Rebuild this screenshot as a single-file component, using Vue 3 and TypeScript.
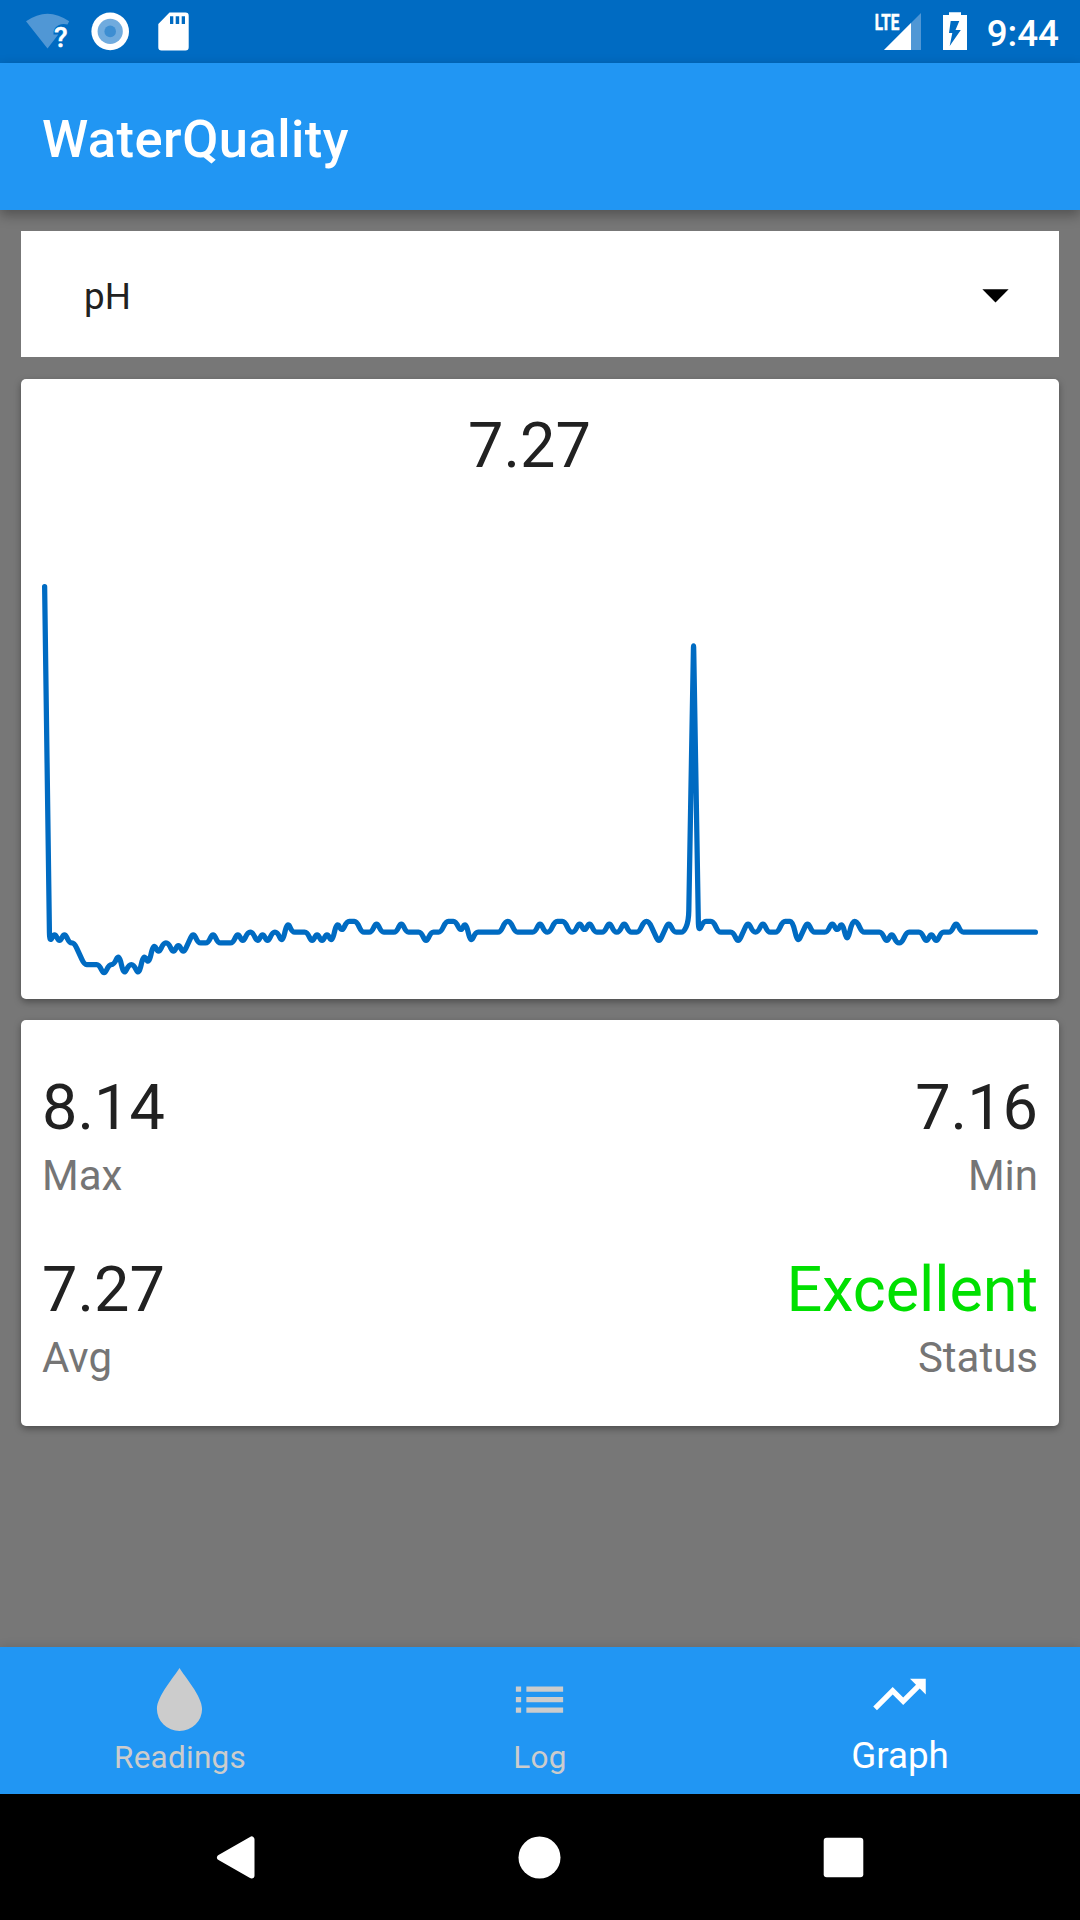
<script setup lang="ts">
interface Stat {
  value: string
  label: string
  good?: boolean
}

interface Point {
  x: number
  y: number
}

const statRows: Stat[][] = [
  [
    { value: '8.14', label: 'Max' },
    { value: '7.16', label: 'Min' },
  ],
  [
    { value: '7.27', label: 'Avg' },
    { value: 'Excellent', label: 'Status', good: true },
  ],
]

// Sensor steps above or below the baseline, as [step, repeat count].
const runs: [number, number][] = [
  [32, 1], [-1, 1], [0, 1], [-1, 1], [0, 1], [-1, 2], [-2, 1], [-3, 4], [-4, 1], [-3, 2],
  [-2, 1], [-4, 1], [-3, 2], [-4, 1], [-2, 1], [-3, 1], [-1, 1], [-2, 1], [-1, 2], [-2, 1],
  [-1, 1], [-2, 1], [-1, 1], [0, 1], [-1, 3], [0, 1], [-1, 4], [0, 1], [-1, 1], [0, 2],
  [-1, 1], [0, 1], [-1, 1], [0, 2], [-1, 1], [1, 1], [0, 4], [-1, 1], [0, 1], [-1, 1],
  [0, 1], [-1, 1], [1, 1], [0, 1], [1, 3], [0, 3], [1, 1], [0, 4], [1, 1], [0, 4],
  [-1, 1], [0, 3], [1, 3], [0, 1], [1, 1], [-1, 1], [0, 6], [1, 2], [0, 5], [1, 1],
  [0, 2], [1, 3], [0, 2], [1, 1], [0, 1], [1, 1], [0, 3], [1, 1], [0, 2], [1, 1],
  [0, 3], [1, 2], [0, 1], [-1, 1], [0, 1], [1, 1], [0, 3], [1, 1], [27, 1], [0, 1], [1, 3],
  [0, 4], [-1, 1], [0, 1], [1, 1], [0, 2], [1, 1], [0, 3], [1, 3], [-1, 1], [0, 1],
  [1, 1], [0, 4], [1, 1], [0, 1], [1, 1], [-1, 1], [1, 2], [0, 5], [-1, 1], [0, 1],
  [-1, 2], [0, 4], [-1, 1], [0, 1], [-1, 1], [0, 3], [1, 1], [0, 16],
]

const CHART_W = 996
const CHART_H = 394
const INSET = 2.625
const CORNER = 10.5

function sparkline(): string {
  const levels = runs.flatMap(([step, count]) => Array<number>(count).fill(step))
  const top = Math.max(...levels)
  const bottom = Math.min(...levels)
  const dx = (CHART_W - 2 * INSET) / (levels.length - 1)
  const dy = (CHART_H - 2 * INSET) / (top - bottom)
  const pts: Point[] = levels.map((v, i) => ({ x: INSET + i * dx, y: INSET + (top - v) * dy }))

  // Each corner is rounded by at most CORNER, or half of the shorter segment.
  const towards = (a: Point, b: Point): Point => {
    const d = Math.hypot(b.x - a.x, b.y - a.y)
    const k = d <= CORNER * 2 ? 0.5 : CORNER / d
    return { x: a.x + (b.x - a.x) * k, y: a.y + (b.y - a.y) * k }
  }
  const f = (p: Point) => `${p.x.toFixed(2)} ${p.y.toFixed(2)}`
  let d = `M${f(pts[0])}`
  for (let i = 1; i < pts.length - 1; i++) {
    d += `L${f(towards(pts[i], pts[i - 1]))}Q${f(pts[i])} ${f(towards(pts[i], pts[i + 1]))}`
  }
  return d + `L${f(pts[pts.length - 1])}`
}

const chartPath = sparkline()

const tabs = [
  { label: 'Readings', active: false, icon: 'M12 0C10 3.4 3.4 10.700 3.4 15.600a8.600 8.400 0 0 0 17.200 0C20.600 10.700 14 3.400 12 0z' },
  { label: 'Log', active: false, icon: 'M3 13h2v-2H3v2zm0 4h2v-2H3v2zm0-8h2V7H3v2zm4 4h14v-2H7v2zm0 4h14v-2H7v2zM7 7v2h14V7H7z' },
  { label: 'Graph', active: true, icon: 'M16 6l2.290 2.290-4.880 4.880-4-4L2 16.590 3.410 18l6-6 4 4 6.300-6.290L22 12V6z' },
]
</script>

<template>
  <div class="screen">
    <header class="status">
      <div class="status-left">
        <svg width="44" height="63" viewBox="26 0 44 63">
          <path d="M26 21.300Q47.500 6 69.200 21.300L67.500 24.500Q60 22.500 55 28Q53 31 53.500 34.500H58.300L47.500 48.500z" fill="#5097d5" />
          <text x="54" y="47" class="query">?</text>
        </svg>
        <svg width="38" height="63" viewBox="0 0 38 63">
          <circle cx="19.200" cy="31.400" r="18.800" fill="#fff" />
          <circle cx="19.200" cy="31.400" r="12.600" fill="#70abde" />
          <circle cx="19.200" cy="31.400" r="5.800" fill="#3d8ed2" />
        </svg>
        <svg width="32" height="63" viewBox="158 0 32 63">
          <path fill="#fff" fill-rule="evenodd" d="M169.500 12.500H185.500a3.200 3.200 0 0 1 3.200 3.200V47.300a3.200 3.200 0 0 1-3.200 3.200H161.500a3.200 3.200 0 0 1-3.200-3.200V24zM170 16.300v7.700h3.300v-7.700zM175.700 16.300v7.700h3.500v-7.700zM181.700 16.300v7.700h3.300v-7.700z" />
        </svg>
      </div>
      <div class="status-right">
        <svg width="47" height="63" viewBox="874 0 47 63">
          <path d="M921 13V50H884z" fill="#5097d5" />
          <path d="M911 23V50H884z" fill="#fff" />
          <text x="874.800" y="29.700" textLength="24.500" lengthAdjust="spacingAndGlyphs" class="lte">LTE</text>
        </svg>
        <svg width="24" height="63" viewBox="943 0 24 63">
          <path fill="#fff" fill-rule="evenodd" d="M949 12.300H961V15H967V50H943V15H949zM950.700 21H959.300L955.500 30H960.800L949.700 46L952.300 33H949z" />
        </svg>
        <span class="clock">9:44</span>
      </div>
    </header>

    <div class="toolbar">
      <h1>WaterQuality</h1>
    </div>

    <main>
      <div class="spinner">
        <span>pH</span>
        <svg width="63" height="63" viewBox="0 0 24 24"><path d="M7 10l5 5 5-5z" /></svg>
      </div>

      <section class="card chart-card">
        <div class="reading">7.27</div>
        <svg class="chart" width="996" height="394" viewBox="0 0 996 394">
          <path :d="chartPath" fill="none" stroke="#006bc2" stroke-width="5.250" stroke-linecap="round" />
        </svg>
      </section>

      <section class="card stats">
        <div v-for="(row, i) in statRows" :key="i" class="stat-row">
          <div v-for="s in row" :key="s.label" class="stat">
            <div class="value" :class="{ good: s.good }">{{ s.value }}</div>
            <div class="label">{{ s.label }}</div>
          </div>
        </div>
      </section>
    </main>

    <nav class="tabs">
      <div v-for="t in tabs" :key="t.label" class="tab" :class="{ active: t.active }">
        <svg width="63" height="63" viewBox="0 0 24 24"><path :d="t.icon" fill="currentColor" /></svg>
        <span>{{ t.label }}</span>
      </div>
    </nav>

    <footer class="sysnav">
      <svg width="63" height="63" viewBox="0 0 63 63">
        <path d="M16 31.500L47.500 13.500V49.500z" fill="#fff" stroke="#fff" stroke-width="6" stroke-linejoin="round" />
      </svg>
      <svg width="63" height="63" viewBox="0 0 63 63"><circle cx="31.500" cy="31.500" r="21" fill="#fff" /></svg>
      <svg width="63" height="63" viewBox="0 0 63 63"><rect x="11.700" y="11.700" width="39.600" height="39.600" rx="3" fill="#fff" /></svg>
    </footer>
  </div>
</template>

<style>
body {
  margin: 0;
}
</style>

<style scoped>
.screen {
  width: 1080px;
  height: 1920px;
  display: flex;
  flex-direction: column;
  overflow: hidden;
  background: #777;
  font-family: Roboto, sans-serif;
  color: #212121;
}

svg {
  display: block;
  flex: none;
}

.status {
  height: 63px;
  flex: none;
  display: flex;
  justify-content: space-between;
  background: #006bc2;
  color: #fff;
}

.status-left,
.status-right {
  display: flex;
}

.status-left {
  padding-left: 26px;
  gap: 21px;
}

.status-left svg:last-child {
  margin-left: 8px;
}

.status-right {
  gap: 22px;
  padding-right: 21px;
}

.query {
  font: 500 28px Roboto, sans-serif;
  fill: #fff;
  stroke: #fff;
  stroke-width: 0.4px;
}

.lte {
  font: 700 22px Roboto, sans-serif;
  fill: #fff;
  stroke: #fff;
  stroke-width: 0.6px;
}

.clock {
  font-size: 36.75px;
  font-weight: 500;
  line-height: 67px;
  margin-left: -2px;
}

.toolbar {
  height: 147px;
  flex: none;
  box-sizing: border-box;
  padding: 5px 42px 0;
  display: flex;
  align-items: center;
  background: #2196f3;
  box-shadow: 0 5px 12px rgba(0, 0, 0, 0.32);
}

.toolbar h1 {
  margin: 0;
  font-size: 52.5px;
  font-weight: 500;
  line-height: 62px;
  letter-spacing: 0.46px;
  color: #fff;
}

main {
  flex: 1;
  padding: 21px;
}

.spinner {
  height: 126px;
  box-sizing: border-box;
  padding: 0 32px 0 63px;
  display: flex;
  align-items: center;
  justify-content: space-between;
  background: #fff;
  font-size: 36.75px;
}

.spinner span {
  padding-top: 5px;
}

.card {
  background: #fff;
  border-radius: 5px;
  box-shadow: 0 3px 7px rgba(0, 0, 0, 0.35);
  box-sizing: border-box;
}

.chart-card {
  height: 620px;
  margin-top: 22px;
  padding: 30px 21px 21px;
  display: flex;
  flex-direction: column;
  justify-content: space-between;
}

.reading {
  padding-right: 21px;
  text-align: center;
  font-size: 63px;
  line-height: 74px;
}

.chart {
  overflow: visible;
}

.stats {
  height: 406px;
  margin-top: 21px;
  padding: 51px 21px 0;
  display: flex;
  flex-direction: column;
  gap: 52px;
}

.stat-row {
  display: flex;
  justify-content: space-between;
}

.stat:last-child {
  text-align: right;
}

.value {
  font-size: 63px;
  line-height: 74px;
}

.value.good {
  letter-spacing: -0.1px;
  color: #00e000;
}

.label {
  margin-top: 6px;
  font-size: 42px;
  line-height: 50px;
  color: #757575;
}

.tabs {
  height: 147px;
  flex: none;
  display: flex;
  background: #2196f3;
  box-shadow: 0 0 10px rgba(0, 0, 0, 0.12);
}

.tab {
  flex: 1;
  box-sizing: border-box;
  height: 147px;
  padding: 21px 0 13px;
  display: flex;
  flex-direction: column;
  align-items: center;
  justify-content: space-between;
  color: #ccc;
  font-size: 31.5px;
  line-height: 46px;
  letter-spacing: 0.25px;
}

.tab svg {
  margin-right: 2px;
}

.tab.active {
  padding: 16px 0 15px;
  color: #fff;
  font-size: 36.75px;
  letter-spacing: 0;
}

.sysnav {
  height: 126px;
  flex: none;
  box-sizing: border-box;
  padding-right: 1px;
  display: flex;
  align-items: center;
  justify-content: center;
  gap: 241px;
  background: #000;
}
</style>
